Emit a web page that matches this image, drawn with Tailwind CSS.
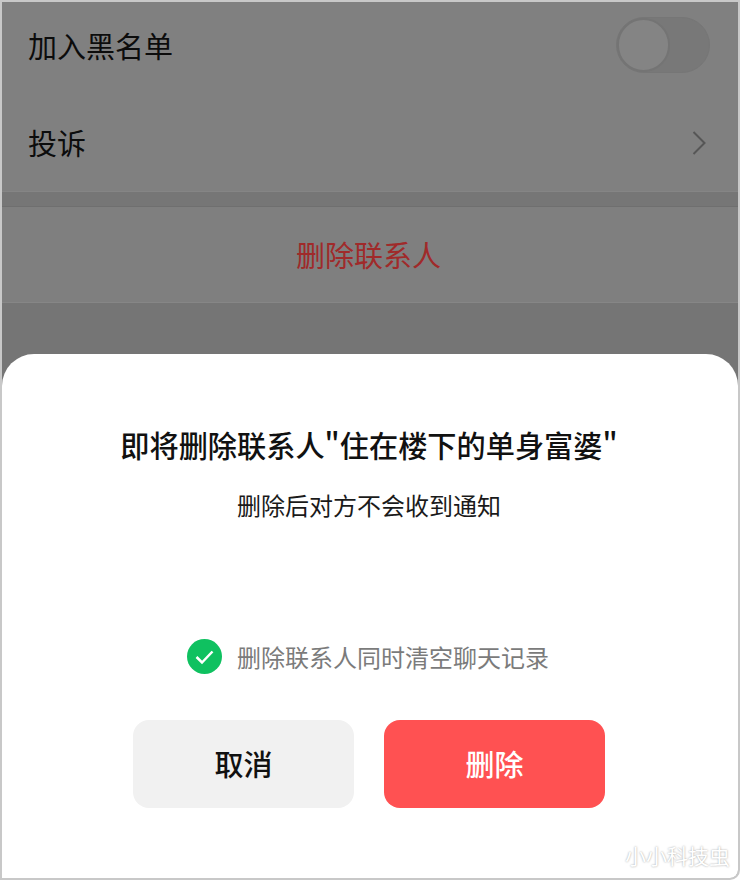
<!DOCTYPE html>
<html lang="zh-CN">
  <head>
    <meta charset="UTF-8" />
    <title>删除联系人</title>
    <script src="https://cdn.jsdelivr.net/npm/@tailwindcss/browser@4"></script>
  </head>
  <body>
    <div class="relative w-[740px] h-[880px] overflow-hidden bg-white font-['Noto_Sans_CJK_SC','Liberation_Sans',sans-serif]">
      <div class="flex flex-col h-full border-2 border-[#c8c8c8] rounded-br-[10px] overflow-hidden bg-[#757575]">
        <div class="bg-[#808080]">
          <div class="flex items-center justify-between h-[96px] pl-[26px] pr-[28px] pb-[10px]">
            <span class="text-[29px] leading-none text-[#0c0c0c]">加入黑名单</span>
            <div class="relative w-[94px] h-[56px] rounded-full bg-[#787878] border border-[#767676]">
              <div class="absolute left-0 top-0 w-[53px] h-[54px] rounded-full bg-[#848484] border-2 border-[#747474]"></div>
            </div>
          </div>
          <div class="flex items-center justify-between h-[93px] pl-[26px] pr-[31px] pb-[5px]">
            <span class="text-[29px] leading-none text-[#0c0c0c]">投诉</span>
            <svg class="mt-[2px]" width="15" height="24" viewBox="0 0 15 24" fill="none" stroke="#565656" stroke-width="2"><path d="M1.500 1 L12.500 12 L1.500 23" /></svg>
          </div>
        </div>
        <div class="h-[16px] bg-[#767676] border-t border-[#858585] border-b-[#6f6f6f] border-b"></div>
        <div class="flex items-center justify-center h-[96px] bg-[#7f7f7f] border-b border-[#868686] pr-[3px]">
          <span class="text-[29px] leading-none text-[#a02a2a]">删除联系人</span>
        </div>
        <div class="h-[51px] bg-[#757575]"></div>
        <div class="flex-1 flex flex-col items-center bg-white rounded-t-[32px] pr-[2px]">
          <h1 class="mt-[72px] text-[29.200px] leading-[36px] font-medium text-[#111] whitespace-nowrap">即将删除联系人"住在楼下的单身富婆"</h1>
          <p class="mt-[27px] text-[24px] leading-[32px] text-[#1a1a1a]">删除后对方不会收到通知</p>
          <div class="flex items-center gap-[15px] mt-[118px] mr-[2px]">
            <svg width="35" height="35" viewBox="0 0 35 35"><circle cx="17.500" cy="17.500" r="17.500" fill="#0fc160" /><path d="M9.500 18 L15 23.500 L25.500 12.500" fill="none" stroke="#fff" stroke-width="2.500" /></svg>
            <span class="text-[24px] leading-[34px] text-[#7b7b7b]">删除联系人同时清空聊天记录</span>
          </div>
          <div class="flex gap-[30px] mt-[46px]">
            <button class="w-[221px] h-[88px] rounded-[16px] bg-[#f1f1f1] text-[29px] font-medium text-[#111]">取消</button>
            <button class="w-[221px] h-[88px] rounded-[16px] bg-[#ff5152] text-[29px] font-medium text-white">删除</button>
          </div>
        </div>
      </div>
      <div class="absolute right-[10px] bottom-[11px] text-[21px] leading-[28px] text-white [text-shadow:0_0_2px_#999]">小小科技虫</div>
    </div>
  </body>
</html>
